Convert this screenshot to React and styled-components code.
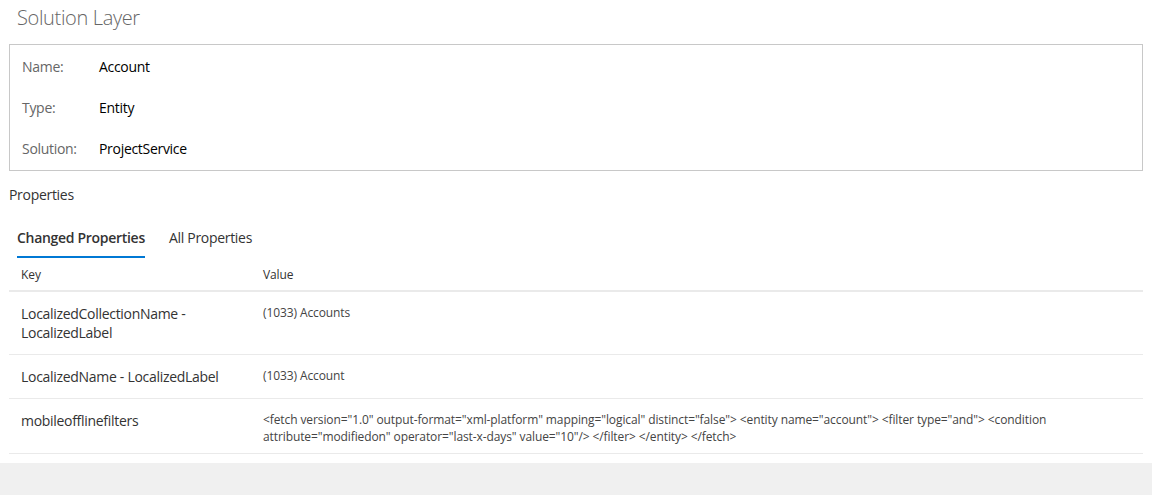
import React, { useState } from "react";
import styled, { createGlobalStyle } from "styled-components";

const GlobalStyle = createGlobalStyle`
  html, body { margin: 0; padding: 0; background: #f0f0f0; }
  body { font-family: "Open Sans", "Noto Sans", sans-serif; color: #333; }
  * { box-sizing: border-box; }
`;

const Page = styled.div`
  background: #fff;
  min-height: 463px;
  padding: 0 9px 9px 9px;
  display: flex;
  flex-direction: column;
`;

const Title = styled.h1`
  margin: 0;
  height: 44px;
  padding: 4px 0 0 8px;
  font-size: 20px;
  font-weight: 300;
  line-height: 28px;
  letter-spacing: -0.35px;
  color: #666;
`;

const InfoBox = styled.section`
  border: 1px solid #c8c8c8;
  padding: 1px 12px;
  display: flex;
  flex-direction: column;
`;

const InfoRow = styled.div`
  display: grid;
  grid-template-columns: 77px 1fr;
  height: 41px;
  align-items: center;
  font-size: 14px;
  letter-spacing: -0.3px;
`;

const InfoLabel = styled.span`
  color: #666;
`;

const InfoValue = styled.span`
  color: #000;
`;

const SectionHeading = styled.h2`
  margin: 14px 0 0 0;
  font-size: 14px;
  font-weight: 400;
  line-height: 20px;
  letter-spacing: -0.3px;
  color: #333;
`;

const TabBar = styled.div`
  display: flex;
  margin-top: 15px;
`;

const Tab = styled.button`
  border: none;
  background: none;
  padding: 0 8px;
  margin-right: 8px;
  font-family: inherit;
  font-size: 14px;
  letter-spacing: -0.3px;
  font-weight: ${(p) => (p.$active ? 600 : 400)};
  color: #333;
  cursor: pointer;
  display: flex;
`;

const TabLabel = styled.span`
  height: 38px;
  line-height: 36px;
  border-bottom: 2px solid ${(p) => (p.$active ? "#0078d4" : "transparent")};
`;

const Table = styled.div`
  display: flex;
  flex-direction: column;
`;

const HeaderRow = styled.div`
  display: grid;
  grid-template-columns: 242px 1fr;
  height: 34px;
  align-items: center;
  border-bottom: 2px solid #eaeaea;
  font-size: 12px;
  letter-spacing: -0.1px;
  color: #333;
`;

const HeaderCell = styled.div`
  padding: 0 12px 0 12px;
`;

const Row = styled.div`
  display: grid;
  grid-template-columns: 242px 1fr;
  border-bottom: 1px solid #eaeaea;
  align-items: start;
`;

const KeyCell = styled.div`
  padding: 12px 12px 12px 12px;
  font-size: 14px;
  line-height: 19px;
  letter-spacing: -0.3px;
  color: #333;
`;

const ValueCell = styled.div`
  padding: 12px 12px 8px 12px;
  font-size: 12px;
  line-height: 17px;
  letter-spacing: -0.1px;
  color: #444;
`;

const info = [
  ["Name:", "Account"],
  ["Type:", "Entity"],
  ["Solution:", "ProjectService"],
];

const rows = [
  ["LocalizedCollectionName - LocalizedLabel", "(1033) Accounts"],
  ["LocalizedName - LocalizedLabel", "(1033) Account"],
  [
    "mobileofflinefilters",
    '<fetch version="1.0" output-format="xml-platform" mapping="logical" distinct="false"> <entity name="account"> <filter type="and"> <condition attribute="modifiedon" operator="last-x-days" value="10"/> </filter> </entity> </fetch>',
  ],
];

export default function App() {
  const [tab, setTab] = useState(0);
  return (
    <>
      <GlobalStyle />
      <Page>
        <Title>Solution Layer</Title>
        <InfoBox>
          {info.map(([l, v]) => (
            <InfoRow key={l}>
              <InfoLabel>{l}</InfoLabel>
              <InfoValue>{v}</InfoValue>
            </InfoRow>
          ))}
        </InfoBox>
        <SectionHeading>Properties</SectionHeading>
        <TabBar>
          {["Changed Properties", "All Properties"].map((t, i) => (
            <Tab key={t} $active={tab === i} onClick={() => setTab(i)}>
              <TabLabel $active={tab === i}>{t}</TabLabel>
            </Tab>
          ))}
        </TabBar>
        <Table>
          <HeaderRow>
            <HeaderCell>Key</HeaderCell>
            <HeaderCell>Value</HeaderCell>
          </HeaderRow>
          {rows.map(([k, v]) => (
            <Row key={k}>
              <KeyCell>{k}</KeyCell>
              <ValueCell>{v}</ValueCell>
            </Row>
          ))}
        </Table>
      </Page>
    </>
  );
}
